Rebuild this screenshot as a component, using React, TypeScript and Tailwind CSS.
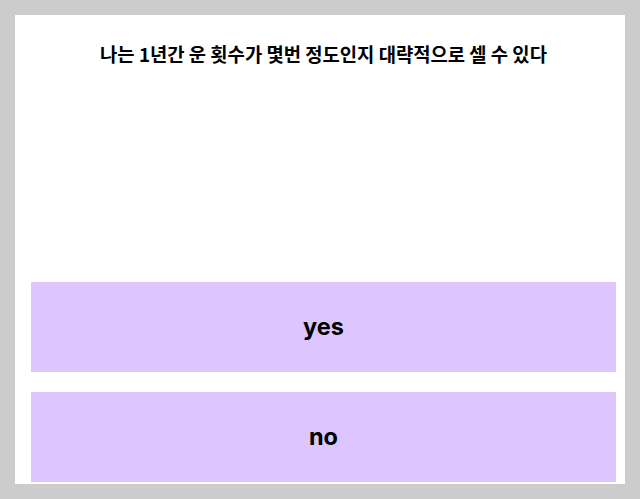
export default function App() {
  return (
    <div className="w-[640px] h-[499px] bg-[#cccccc] pt-[15px] pl-[15px]">
      <div className="w-[610px] h-[469px] bg-white flex flex-col pl-4 pr-[9px] pb-[2px]">
        <div
          className="pt-[26px] text-center text-[18.8px] font-bold text-black leading-[26px] whitespace-nowrap"
          style={{ fontFamily: '"Noto Sans CJK KR", "Noto Sans", sans-serif' }}
        >
          나는 1년간 운 횟수가 몇번 정도인지 대략적으로 셀 수 있다
        </div>
        <div className="flex-1" />
        <div className="flex flex-col gap-5" style={{ fontFamily: 'Inter, "Liberation Sans", sans-serif' }}>
          <button className="h-[90px] w-full bg-[#ddc6fd] text-[23.5px] font-bold text-black">yes</button>
          <button className="h-[90px] w-full bg-[#ddc6fd] text-[23.5px] font-bold text-black">no</button>
        </div>
      </div>
    </div>
  );
}
